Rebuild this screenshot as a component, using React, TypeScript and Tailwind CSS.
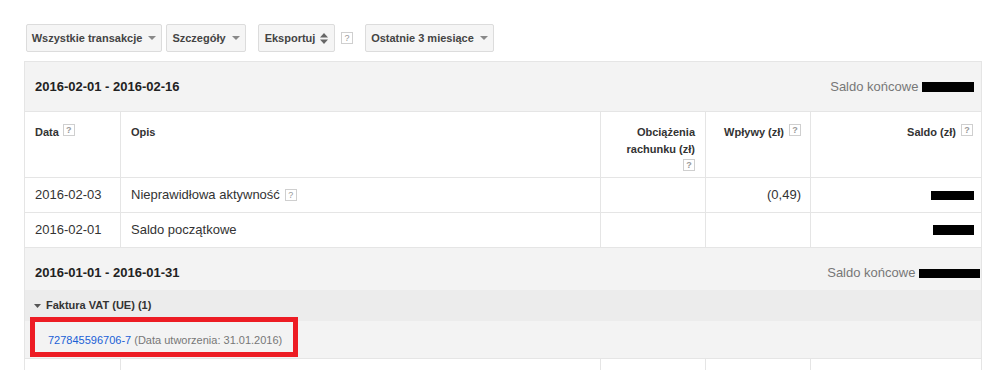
import React from "react";

const Q = () => (
  <span className="inline-flex items-center justify-center w-[12px] h-[12px] border border-[#cfcfcf] bg-white text-[9px] leading-none text-[#999] align-middle">
    ?
  </span>
);

const Caret = () => (
  <svg width="8" height="4" viewBox="0 0 8 4" className="ml-[6px]">
    <path d="M0 0 L8 0 L4 4 Z" fill="#888" />
  </svg>
);

const Btn = ({ children, w }: { children: React.ReactNode; w: string }) => (
  <div
    className={`flex items-center justify-center h-[28px] ${w} bg-[#f5f5f5] border border-[#dcdcdc] rounded-[2px] text-[11px] font-bold text-[#444]`}
  >
    {children}
  </div>
);

const Redact = ({ w, h = "h-[10px]" }: { w: string; h?: string }) => (
  <span className={`inline-block ${w} ${h} bg-black align-middle`} />
);

export default function App() {
  return (
    <div
      className="w-[1001px] h-[370px] bg-white overflow-hidden"
      style={{ fontFamily: '"Liberation Sans", Arial, sans-serif' }}
    >
      <div className="pt-[24px] pl-[26px] flex items-center">
        <Btn w="w-[136px]">
          Wszystkie transakcje
          <Caret />
        </Btn>
        <div className="w-[4px]" />
        <Btn w="w-[80px]">
          Szczegóły
          <Caret />
        </Btn>
        <div className="w-[12px]" />
        <Btn w="w-[77px]">
          Eksportuj
          <svg width="8" height="11" viewBox="0 0 8 11" className="ml-[5px]">
            <path d="M0 4.5 L8 4.5 L4 0 Z" fill="#666" />
            <path d="M0 6.5 L8 6.5 L4 11 Z" fill="#666" />
          </svg>
        </Btn>
        <div className="w-[6px]" />
        <Q />
        <div className="w-[12px]" />
        <Btn w="w-[129px]">
          Ostatnie 3 miesiące
          <Caret />
        </Btn>
      </div>

      <div className="mt-[9px] ml-[24px] w-[958px] border border-[#e5e5e5] text-[#333]">
        {/* Section 1 header */}
        <div className="h-[50px] bg-[#f3f3f3] border-b border-[#e5e5e5] flex items-center justify-between pl-[10px] pr-[7px]">
          <span className="text-[13px] font-bold text-[#222]">2016-02-01 - 2016-02-16</span>
          <span className="text-[13px] text-[#777] flex items-center">
            Saldo końcowe&nbsp;
            <Redact w="w-[52px]" />
          </span>
        </div>

        {/* Table header */}
        <div className="flex h-[66px] border-b border-[#e5e5e5] text-[11px] font-bold text-[#333]">
          <div className="w-[95px] pl-[10px] pt-[12px] flex items-start gap-[4px]">
            <span>Data</span>
            <Q />
          </div>
          <div className="w-[480px] border-l border-[#e5e5e5] pl-[10px] pt-[12px]">Opis</div>
          <div className="w-[105px] border-l border-[#e5e5e5] pr-[10px] pt-[12px] text-right leading-[17px]">
            Obciążenia
            <br />
            rachunku (zł)
            <div className="flex justify-end mt-[1px]">
              <Q />
            </div>
          </div>
          <div className="w-[105px] border-l border-[#e5e5e5] pr-[9px] pt-[12px] flex justify-end items-start gap-[5px]">
            <span>Wpływy (zł)</span>
            <Q />
          </div>
          <div className="flex-1 border-l border-[#e5e5e5] pr-[8px] pt-[12px] flex justify-end items-start gap-[5px]">
            <span>Saldo (zł)</span>
            <Q />
          </div>
        </div>

        {/* Row 1 */}
        <div className="flex h-[35px] border-b border-[#e5e5e5] text-[13px] text-[#333]">
          <div className="w-[95px] pl-[10px] flex items-center">2016-02-03</div>
          <div className="w-[480px] border-l border-[#e5e5e5] pl-[10px] flex items-center gap-[5px]">
            <span>Nieprawidłowa aktywność</span>
            <Q />
          </div>
          <div className="w-[105px] border-l border-[#e5e5e5]" />
          <div className="w-[105px] border-l border-[#e5e5e5] pr-[9px] flex items-center justify-end">(0,49)</div>
          <div className="flex-1 border-l border-[#e5e5e5] pr-[7px] flex items-center justify-end">
            <Redact w="w-[43px]" h="h-[9px]" />
          </div>
        </div>

        {/* Row 2 */}
        <div className="flex h-[35px] border-b border-[#e5e5e5] text-[13px] text-[#333]">
          <div className="w-[95px] pl-[10px] flex items-center">2016-02-01</div>
          <div className="w-[480px] border-l border-[#e5e5e5] pl-[10px] flex items-center">Saldo początkowe</div>
          <div className="w-[105px] border-l border-[#e5e5e5]" />
          <div className="w-[105px] border-l border-[#e5e5e5]" />
          <div className="flex-1 border-l border-[#e5e5e5] pr-[7px] flex items-center justify-end">
            <Redact w="w-[41px]" />
          </div>
        </div>

        {/* Section 2 header */}
        <div className="h-[42px] bg-[#f3f3f3] flex items-center justify-between pl-[10px] pr-[1px] pt-[8px]">
          <span className="text-[13px] font-bold text-[#222]">2016-01-01 - 2016-01-31</span>
          <span className="text-[13px] text-[#777] flex items-center">
            Saldo końcowe&nbsp;
            <Redact w="w-[61px]" h="h-[9px]" />
          </span>
        </div>

        {/* Faktura group */}
        <div className="h-[31px] bg-[#ececec] flex items-center pl-[9px]">
          <svg width="7" height="4" viewBox="0 0 7 4" className="mr-[5px]">
            <path d="M0 0 L7 0 L3.5 4 Z" fill="#555" />
          </svg>
          <span className="text-[11px] font-bold text-[#333]">Faktura VAT (UE) (1)</span>
        </div>

        {/* Invoice row */}
        <div className="h-[38px] bg-[#f3f3f3] border-b border-[#e5e5e5] relative">
          <div className="absolute left-[5px] top-[-4px] w-[268px] h-[40px] border-[5px] border-[#ed1c24]" />
          <div className="h-full flex items-center pl-[23px] pt-[1px] text-[11px]">
            <span className="text-[#1a5fd6]">727845596706-7</span>
            <span className="text-[#777]">&nbsp;(Data utworzenia: 31.01.2016)</span>
          </div>
        </div>

        {/* Next row (partial) */}
        <div className="flex h-[30px]">
          <div className="w-[95px]" />
          <div className="w-[480px] border-l border-[#e5e5e5]" />
          <div className="w-[105px] border-l border-[#e5e5e5]" />
          <div className="w-[105px] border-l border-[#e5e5e5]" />
          <div className="flex-1 border-l border-[#e5e5e5]" />
        </div>
      </div>
    </div>
  );
}
